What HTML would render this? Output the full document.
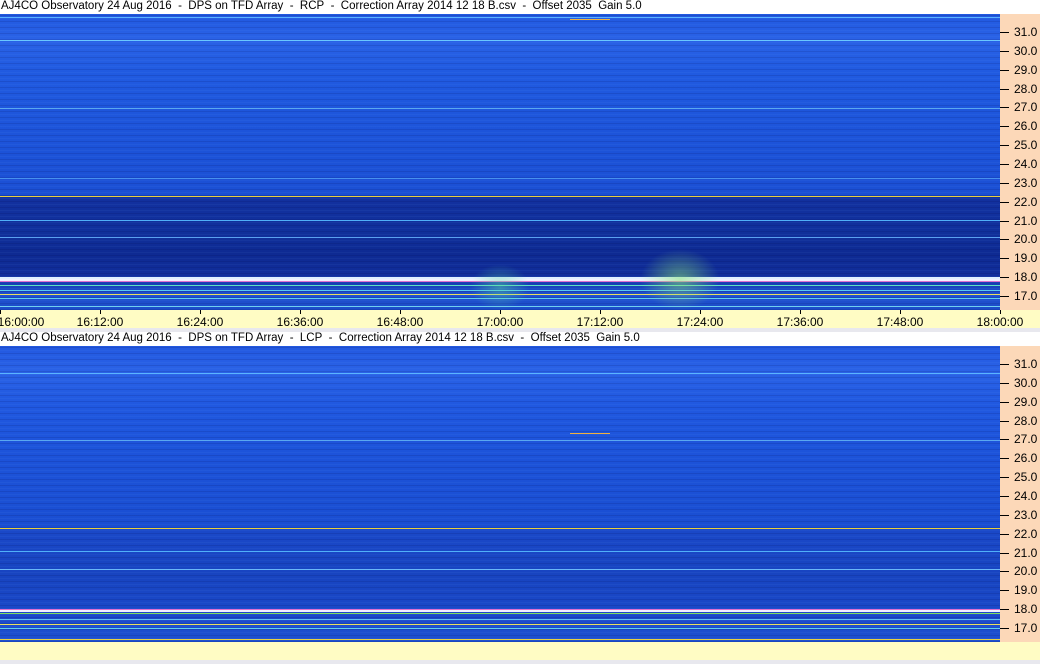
<!DOCTYPE html>
<html><head><meta charset="utf-8"><style>
*{margin:0;padding:0;box-sizing:border-box}
body{width:1040px;height:664px;position:relative;overflow:hidden;background:#e8e8ee;font-family:"Liberation Sans",sans-serif;font-size:12px;color:#000}
.title{position:absolute;left:0;width:1040px;height:14px;background:#fff;line-height:13px;padding-left:1px;white-space:nowrap;font-size:11.5px}
.spec{position:absolute;left:0;width:1000px;height:296px;overflow:hidden}
.spec div{position:absolute;left:0;width:1000px}
.tex{top:0;height:296px;background:repeating-linear-gradient(0deg,rgba(0,0,60,.12) 0 1px,transparent 1px 3px,rgba(120,180,255,.06) 3px 4px,transparent 4px 6px)}
.axis{position:absolute;left:1000px;width:40px;height:296px;background:#fcd8b8}
.axis span{position:absolute;left:14px;font-size:12px;line-height:12px}
.axis i{position:absolute;left:0;width:9px;height:1px;background:#000}
.time{position:absolute;left:0;width:1040px;height:18px;background:#fffcc4}
.time span{position:absolute;top:6px;font-size:12px;line-height:12px;transform:translateX(-50%)}
.time i{position:absolute;top:0;width:1px;height:4px;background:#000}
</style></head><body>
<div class="title" style="top:0">AJ4CO Observatory 24 Aug 2016&nbsp; - &nbsp;DPS on TFD Array&nbsp; - &nbsp;RCP&nbsp; - &nbsp;Correction Array 2014 12 18 B.csv&nbsp; - &nbsp;Offset 2035&nbsp; Gain 5.0</div>

<div class="spec" style="top:14px;background:linear-gradient(180deg,#2058e0 0,#2a62e6 25px,#205ae0 60px,#1d54da 120px,#1b4fd4 181px,#12309e 183px,#10309c 215px,#0e2a92 240px,#112e9c 262px,#1a48c4 275px,#2050d0 282px,#1a4cc8 296px)">
<div class="tex"></div>
<div style="top:3px;height:1px;background:#5ab4ff"></div>
<div style="top:26px;height:1px;background:#6ac8ff"></div>
<div style="top:94px;height:1px;background:#5aa8f0"></div>
<div style="top:164px;height:1px;background:#4890ee"></div>
<div style="top:182px;height:1px;background:#e8d040"></div>
<div style="top:206px;height:1px;background:#50b0f8"></div>
<div style="top:223px;height:1px;background:#5aa0f0"></div>
<div style="top:263px;height:2px;background:#e0f0ff"></div>
<div style="top:265px;height:2px;background:#f0f0ff"></div>
<div style="top:267px;height:1px;background:#e070d0"></div>
<div style="top:271px;height:1px;background:#60e0c0"></div>
<div style="top:276px;height:1px;background:#5ac8f0"></div>
<div style="top:280px;height:1px;background:#e8e060"></div>
<div style="top:284px;height:1px;background:#60d0f0"></div>
<div style="top:292px;height:1px;background:#70d0f0"></div>
<div style="left:470px;width:60px;top:250px;height:46px;background:radial-gradient(ellipse,rgba(90,220,160,.45),transparent 70%)"></div>
<div style="left:640px;width:80px;top:235px;height:61px;background:radial-gradient(ellipse,rgba(140,230,120,.55),transparent 70%)"></div>
<div style="left:570px;width:40px;top:5px;height:1px;background:#f0b040"></div>
</div>
<div class="axis" style="top:14px">
<i style="top:18px"></i><span style="top:12px">31.0</span>
<i style="top:37px"></i><span style="top:31px">30.0</span>
<i style="top:56px"></i><span style="top:50px">29.0</span>
<i style="top:75px"></i><span style="top:69px">28.0</span>
<i style="top:93px"></i><span style="top:87px">27.0</span>
<i style="top:112px"></i><span style="top:106px">26.0</span>
<i style="top:131px"></i><span style="top:125px">25.0</span>
<i style="top:150px"></i><span style="top:144px">24.0</span>
<i style="top:169px"></i><span style="top:163px">23.0</span>
<i style="top:188px"></i><span style="top:182px">22.0</span>
<i style="top:207px"></i><span style="top:201px">21.0</span>
<i style="top:225px"></i><span style="top:219px">20.0</span>
<i style="top:244px"></i><span style="top:238px">19.0</span>
<i style="top:263px"></i><span style="top:257px">18.0</span>
<i style="top:282px"></i><span style="top:276px">17.0</span>
</div>
<div class="time" style="top:310px">
<i style="left:0"></i><span style="left:21px">16:00:00</span>
<i style="left:100px"></i><span style="left:100px">16:12:00</span>
<i style="left:200px"></i><span style="left:200px">16:24:00</span>
<i style="left:300px"></i><span style="left:300px">16:36:00</span>
<i style="left:400px"></i><span style="left:400px">16:48:00</span>
<i style="left:500px"></i><span style="left:500px">17:00:00</span>
<i style="left:600px"></i><span style="left:600px">17:12:00</span>
<i style="left:700px"></i><span style="left:700px">17:24:00</span>
<i style="left:800px"></i><span style="left:800px">17:36:00</span>
<i style="left:900px"></i><span style="left:900px">17:48:00</span>
<i style="left:1000px"></i><span style="left:1000px">18:00:00</span>
</div>

<div class="title" style="top:332px">AJ4CO Observatory 24 Aug 2016&nbsp; - &nbsp;DPS on TFD Array&nbsp; - &nbsp;LCP&nbsp; - &nbsp;Correction Array 2014 12 18 B.csv&nbsp; - &nbsp;Offset 2035&nbsp; Gain 5.0</div>

<div class="spec" style="top:346px;background:linear-gradient(180deg,#2258e0 0,#2a62e6 25px,#2058e0 60px,#1c52d8 120px,#1a4ed2 181px,#1a48c8 183px,#1844c0 230px,#1a48c8 262px,#1e50d0 296px)">
<div class="tex"></div>
<div style="top:27px;height:1px;background:#5ab4ff"></div>
<div style="top:94px;height:1px;background:#5aa8f0"></div>
<div style="top:182px;height:1px;background:#e8d040"></div>
<div style="top:205px;height:1px;background:#50b0f8"></div>
<div style="top:223px;height:1px;background:#6ab8f8"></div>
<div style="top:263px;height:1px;background:#e070d0"></div>
<div style="top:264px;height:2px;background:#f0f0ff"></div>
<div style="top:267px;height:1px;background:#80e060"></div>
<div style="top:273px;height:1px;background:#60c0f0"></div>
<div style="top:278px;height:1px;background:#e8e060"></div>
<div style="top:282px;height:1px;background:#60d0f0"></div>
<div style="top:293px;height:1px;background:#e8d040"></div>
<div style="left:570px;width:40px;top:87px;height:1px;background:#f0b040"></div>
</div>
<div class="axis" style="top:346px">
<i style="top:18px"></i><span style="top:12px">31.0</span>
<i style="top:37px"></i><span style="top:31px">30.0</span>
<i style="top:56px"></i><span style="top:50px">29.0</span>
<i style="top:75px"></i><span style="top:69px">28.0</span>
<i style="top:93px"></i><span style="top:87px">27.0</span>
<i style="top:112px"></i><span style="top:106px">26.0</span>
<i style="top:131px"></i><span style="top:125px">25.0</span>
<i style="top:150px"></i><span style="top:144px">24.0</span>
<i style="top:169px"></i><span style="top:163px">23.0</span>
<i style="top:188px"></i><span style="top:182px">22.0</span>
<i style="top:207px"></i><span style="top:201px">21.0</span>
<i style="top:225px"></i><span style="top:219px">20.0</span>
<i style="top:244px"></i><span style="top:238px">19.0</span>
<i style="top:263px"></i><span style="top:257px">18.0</span>
<i style="top:282px"></i><span style="top:276px">17.0</span>
</div>
<div class="time" style="top:642px;height:18px"></div>
</body></html>
